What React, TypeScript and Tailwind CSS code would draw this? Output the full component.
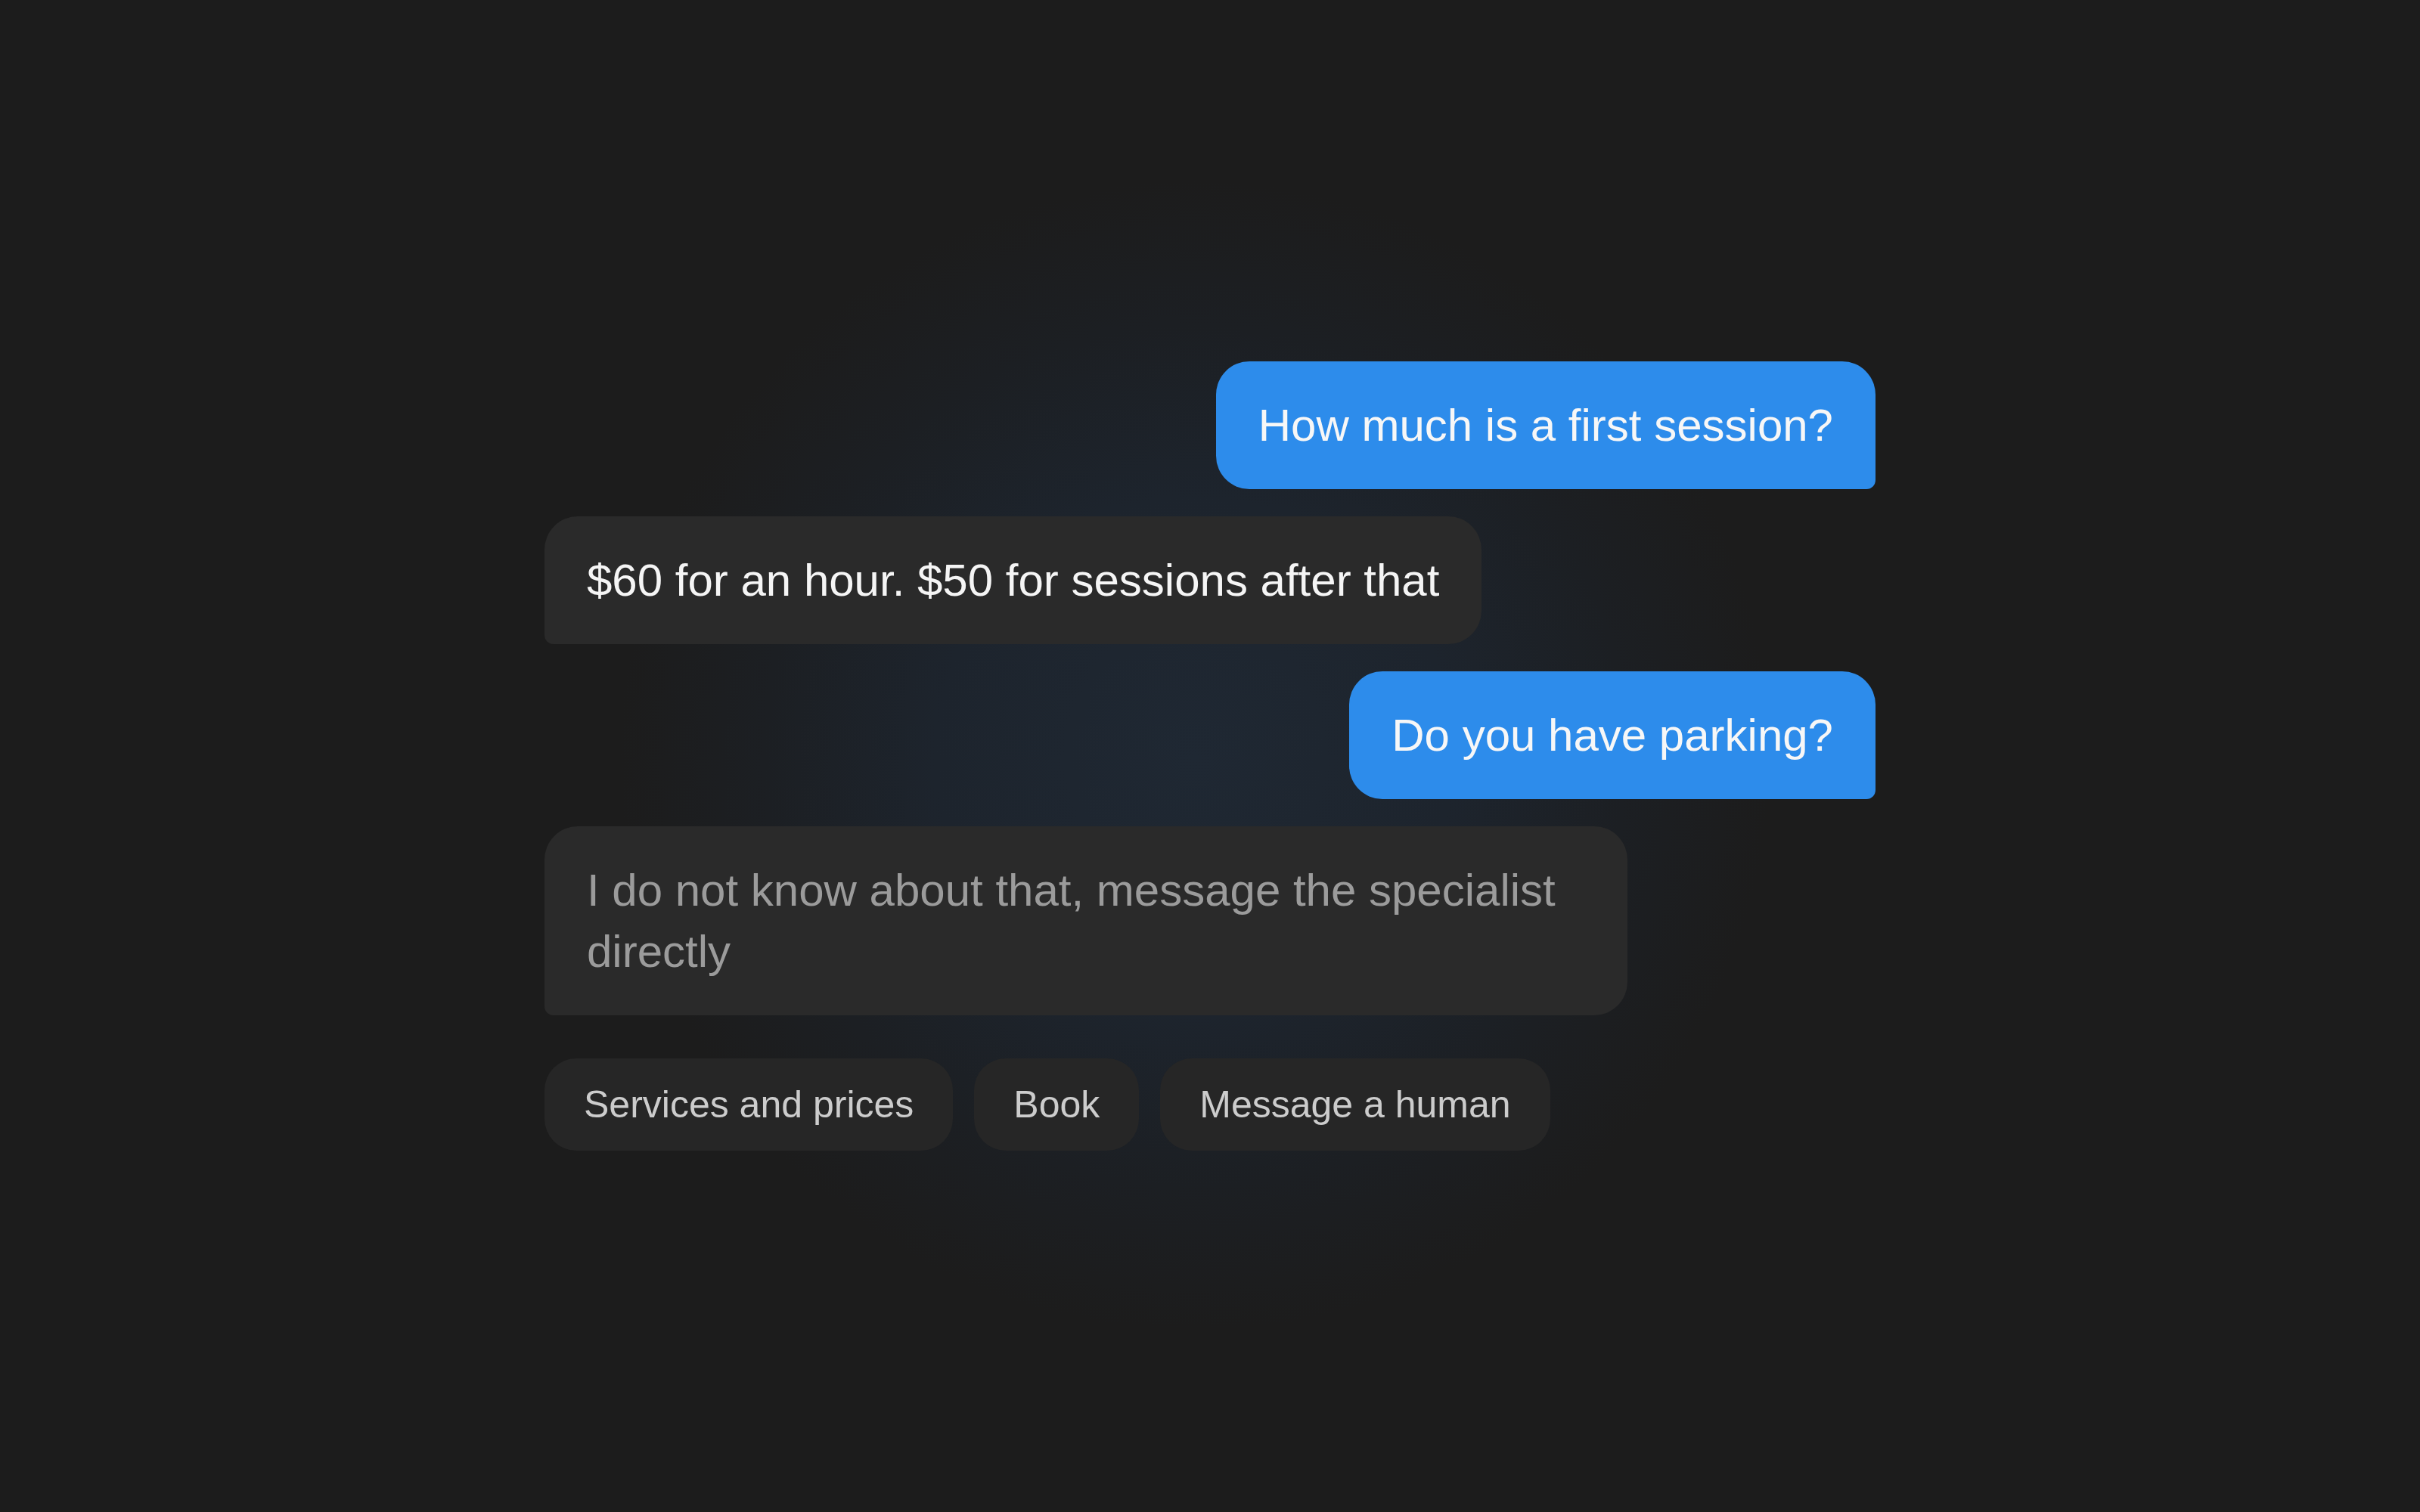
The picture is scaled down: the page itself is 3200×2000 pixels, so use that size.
export default function App() {
  const userBubble =
    "self-end max-w-[1432px] rounded-[44px] rounded-br-[12px] bg-[#2d8ceb] px-[56px] py-[44px] text-[60px] leading-[81px] text-[#f7f7f7]";
  const botBubble =
    "self-start max-w-[1432px] rounded-[44px] rounded-bl-[12px] bg-[#2a2a2a] px-[56px] py-[44px] text-[60px] leading-[81px]";
  const chip =
    "rounded-[42px] bg-[#262626] px-[52px] py-[26px] text-[50px] leading-[70px] text-[#cccccc]";

  return (
    <div
      className="flex min-h-screen w-full items-center justify-center bg-[#1c1c1c] bg-[radial-gradient(circle_760px_at_1580px_1000px,#1f2833_0%,#1d242d_45%,#1c1f23_75%,#1c1c1c_100%)]"
      style={{ fontFamily: '"Liberation Sans", Arial, sans-serif' }}
    >
      <div className="flex w-[1760px] flex-col gap-[36px]">
        <div className={userBubble}>How much is a first session?</div>
        <div className={`${botBubble} text-[#f5f5f5]`}>
          $60 for an hour. $50 for sessions after that
        </div>
        <div className={userBubble}>Do you have parking?</div>
        <div className={`${botBubble} w-[1432px] text-[#9b9b9b]`}>
          I do not know about that, message the specialist directly
        </div>
        <div className="mt-[21px] flex gap-[28px]">
          <button type="button" className={chip}>
            Services and prices
          </button>
          <button type="button" className={chip}>
            Book
          </button>
          <button type="button" className={chip}>
            Message a human
          </button>
        </div>
      </div>
    </div>
  );
}
